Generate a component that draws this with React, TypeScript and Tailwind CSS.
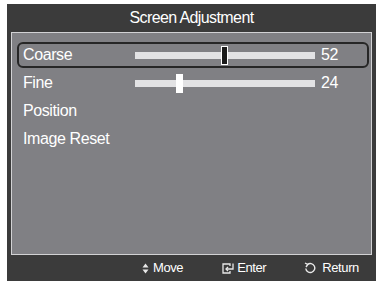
import React from 'react';

const font = { fontFamily: '"Liberation Sans", Arial, sans-serif' };

interface SliderRowProps {
  label: string;
  value?: number;
  thumb?: number;
  selected?: boolean;
}

const SliderRow: React.FC<SliderRowProps> = ({ label, value, thumb, selected }) => {
  const hasSlider = value !== undefined;
  return (
    <div
      className={`flex items-center h-[26px] mb-[2px] pl-[4px] rounded-[6px] border-2 ${
        selected ? 'border-[#262626]' : 'border-transparent'
      }`}
    >
      <span className="w-[112px] text-[16px] text-white tracking-[-0.4px] leading-none">{label}</span>
      {hasSlider && (
        <>
          <div className="relative w-[180px] h-[7px] bg-[#e2e2e4]">
            <div
              className={`absolute top-[-6px] w-[7px] h-[19px] ${
                selected ? 'bg-[#1a1a1a] border border-white' : 'bg-white'
              }`}
              style={{ left: thumb }}
            />
          </div>
          <span className="ml-[6px] text-[16px] text-white tracking-[-0.4px] leading-none">{value}</span>
        </>
      )}
    </div>
  );
};

export default function App() {
  return (
    <div className="w-[376px] h-[281px] bg-white pl-[7px] pt-[4px] overflow-hidden" style={font}>
      <div className="h-full bg-[#3b3b3b] flex flex-col pl-[4px] pr-[4px]">
        {/* Title */}
        <div className="h-[28px] flex items-center justify-center text-white text-[16px] tracking-[-0.6px]">
          Screen Adjustment
        </div>

        {/* Menu panel */}
        <div className="h-[223px] border border-[#d2d2d4] bg-[#808084] pt-[9px] pl-[5px] pr-[2px]">
          <SliderRow label="Coarse" value={52} thumb={86} selected />
          <SliderRow label="Fine" value={24} thumb={41} />
          <SliderRow label="Position" />
          <SliderRow label="Image Reset" />
        </div>

        {/* Footer */}
        <div className="flex-1 flex items-center text-white text-[13px] tracking-[-0.4px]">
          <div className="flex items-center ml-[131px]">
            <svg width="7" height="11" viewBox="0 0 7 11" className="mr-[4px]">
              <path d="M3.5 0.5 L6.5 4.5 L0.5 4.5 Z" fill="#e8e8e8" />
              <path d="M3.5 10.5 L6.5 6.5 L0.5 6.5 Z" fill="#e8e8e8" />
            </svg>
            Move
          </div>
          <div className="flex items-center ml-[39px]">
            <svg width="12" height="11" viewBox="0 0 12 11" className="mr-[3px]" fill="none" stroke="#e8e8e8" strokeWidth="1.3">
              <path d="M8 3 V1 H1 V10 H8 V8" />
              <path d="M11 0.5 V6 H4" />
              <path d="M6 4 L4 6 L6 8" />
            </svg>
            Enter
          </div>
          <div className="flex items-center ml-[38px]">
            <svg width="12" height="12" viewBox="0 0 12 12" className="mr-[6px]" fill="none" stroke="#e8e8e8" strokeWidth="1.4">
              <path d="M3.5 2.5 A4.5 4.5 0 1 1 1.8 6.5" />
              <path d="M1 1 L3.8 2.5 L2 5" />
            </svg>
            Return
          </div>
        </div>
      </div>
    </div>
  );
}
